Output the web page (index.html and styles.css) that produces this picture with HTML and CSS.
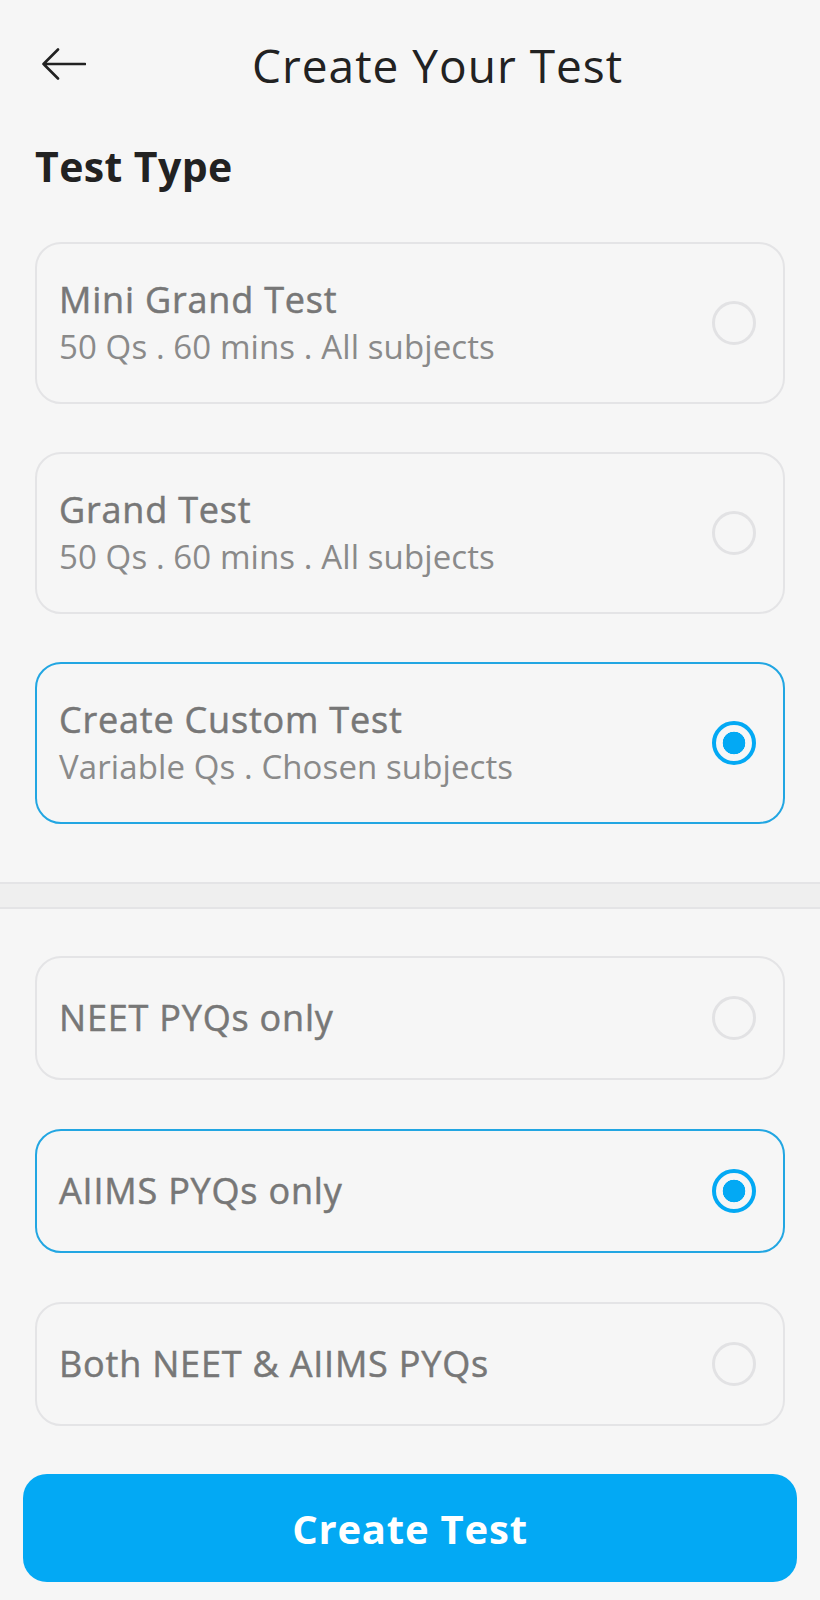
FILE: index.html
```html
<!DOCTYPE html>
<html lang="en">
<head>
<meta charset="utf-8">
<title>Create Your Test</title>
<link rel="stylesheet" href="styles.css">
</head>
<body>
<div class="screen">
  <header class="topbar">
    <button class="back" aria-label="Back">
      <svg width="44" height="32" viewBox="0 0 44 32" fill="none" stroke="#222" stroke-width="2.6" stroke-linecap="round" stroke-linejoin="round"><path d="M16 1.5 L1.5 16 L16 30.5 M1.5 16 H43"/></svg>
    </button>
    <h1 class="title">Create Your Test</h1>
  </header>

  <h2 class="section-label">Test Type</h2>

  <div class="options big">
    <div class="option">
      <div class="option-text">
        <div class="option-title">Mini Grand Test</div>
        <div class="option-sub">50 Qs . 60 mins . All subjects</div>
      </div>
      <span class="radio"></span>
    </div>
    <div class="option">
      <div class="option-text">
        <div class="option-title">Grand Test</div>
        <div class="option-sub">50 Qs . 60 mins . All subjects</div>
      </div>
      <span class="radio"></span>
    </div>
    <div class="option selected">
      <div class="option-text">
        <div class="option-title">Create Custom Test</div>
        <div class="option-sub">Variable Qs . Chosen subjects</div>
      </div>
      <span class="radio on"></span>
    </div>
  </div>

  <div class="divider"></div>

  <div class="options small">
    <div class="option">
      <div class="option-text">
        <div class="option-title">NEET PYQs only</div>
      </div>
      <span class="radio"></span>
    </div>
    <div class="option selected">
      <div class="option-text">
        <div class="option-title">AIIMS PYQs only</div>
      </div>
      <span class="radio on"></span>
    </div>
    <div class="option">
      <div class="option-text">
        <div class="option-title">Both NEET &amp; AIIMS PYQs</div>
      </div>
      <span class="radio"></span>
    </div>
  </div>

  <div class="actions">
    <button class="primary">Create Test</button>
  </div>
</div>
</body>
</html>
```

FILE: styles.css
```css
* { box-sizing: border-box; }
html, body {
  margin: 0;
  padding: 0;
  background: #f6f6f6;
}
body {
  font-family: "Open Sans", "Noto Sans", sans-serif;
  color: #222;
}
.screen {
  width: 820px;
  min-height: 1600px;
  background: #f6f6f6;
}
.topbar {
  height: 130px;
  display: flex;
  align-items: center;
  padding-left: 42px;
}
.back {
  background: none;
  border: 0;
  padding: 0;
  width: 44px;
  height: 32px;
  display: flex;
  margin-top: -2px;
}
.title {
  margin: 0 0 0 166px;
  font-size: 46px;
  font-weight: 400;
  letter-spacing: 1px;
  color: #222;
  line-height: 56px;
}
.section-label {
  margin: 11px 0 51px 35px;
  font-size: 41px;
  line-height: 50px;
  font-weight: 700;
  letter-spacing: 0.4px;
  color: #222;
}
.options {
  display: flex;
  flex-direction: column;
  padding: 0 35px;
}
.options.big { gap: 48px; }
.options.small { gap: 49px; }
.option {
  display: flex;
  align-items: center;
  justify-content: space-between;
  border: 2px solid #e4e4e6;
  border-radius: 26px;
  background: #f6f6f6;
  padding: 0 27px 0 22px;
}
.options.big .option { height: 162px; }
.options.small .option { height: 124px; }
.option.selected { border-color: #22a6e2; }
.option-text {
  display: flex;
  flex-direction: column;
}
.option-title {
  font-size: 36px;
  line-height: 46px;
  font-weight: 400;
  letter-spacing: 0.8px;
  -webkit-text-stroke: 0.5px #777;
  color: #777;
}
.option-sub {
  margin-top: 2px;
  font-size: 33px;
  line-height: 44px;
  font-weight: 400;
  letter-spacing: 0.1px;
  color: #8a8a8a;
}
.radio {
  width: 44px;
  height: 44px;
  border-radius: 50%;
  border: 3px solid #e2e2e4;
  flex: none;
}
.radio.on {
  border: 4px solid #03a9f4;
  background: radial-gradient(circle, #03a9f4 0 11px, transparent 11.6px);
}
.divider {
  margin-top: 58px;
  margin-bottom: 47px;
  height: 27px;
  background: #efefef;
  border-top: 2px solid #e4e4e6;
  border-bottom: 2px solid #e4e4e6;
}
.actions {
  padding: 48px 23px 0 23px;
}
.primary {
  width: 774px;
  height: 108px;
  border: 0;
  border-radius: 24px;
  background: #03a9f4;
  color: #fff;
  font-family: "Open Sans", "Noto Sans", sans-serif;
  font-size: 40px;
  font-weight: 700;
  letter-spacing: 0.8px;
  display: block;
}
```
